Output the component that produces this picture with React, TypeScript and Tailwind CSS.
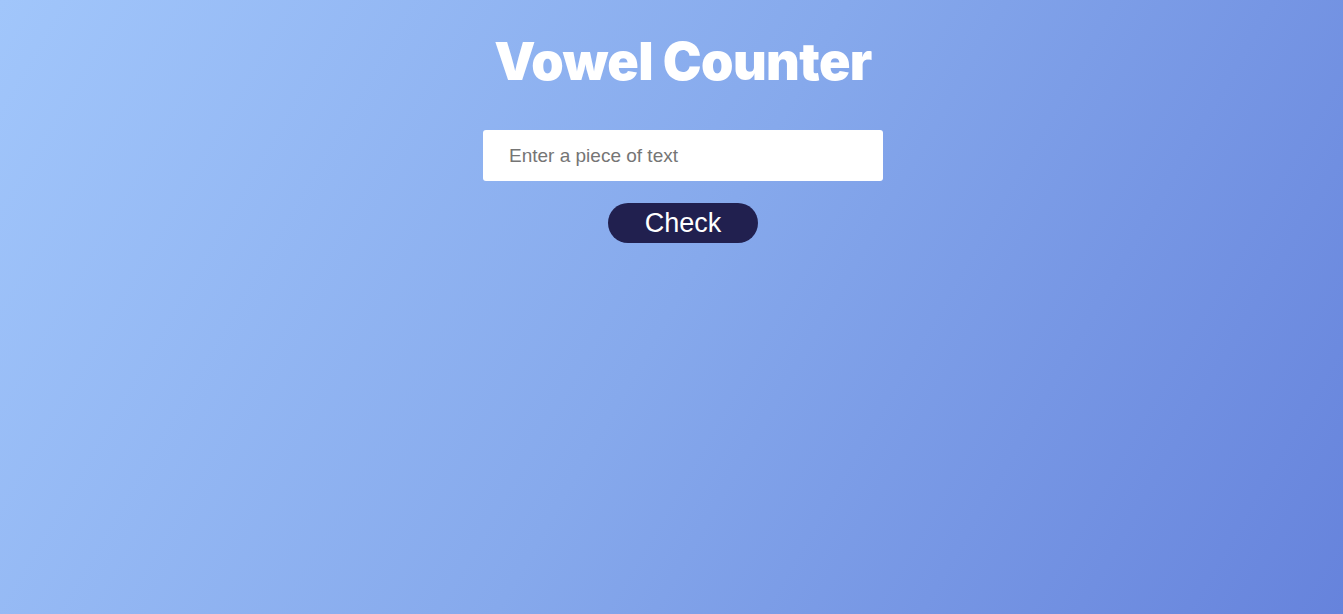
import { useState } from "react";

export default function App() {
  const [text, setText] = useState("");

  return (
    <div className="min-h-screen w-full pl-[23px] bg-[linear-gradient(120deg,#a1c6fb_0%,#86a9ec_50%,#6683dc_100%)] flex flex-col items-center">
      <h1 className="mt-[28px] text-white text-[52px] leading-[68px] font-black tracking-[-0.6px] font-['Inter',sans-serif]">
        Vowel Counter
      </h1>

      <input
        type="text"
        value={text}
        onChange={(e) => setText(e.target.value)}
        placeholder="Enter a piece of text"
        className="mt-[34px] w-[400px] h-[51px] bg-white rounded-[3px] px-[26px] text-[19px] text-gray-800 placeholder:text-[#757575] outline-none font-['Liberation_Sans',Arial,sans-serif]"
      />

      <button className="mt-[22px] w-[150px] h-[40px] rounded-full bg-[#21204f] text-white text-[27px] leading-none font-['Liberation_Sans',Arial,sans-serif]">
        Check
      </button>
    </div>
  );
}
